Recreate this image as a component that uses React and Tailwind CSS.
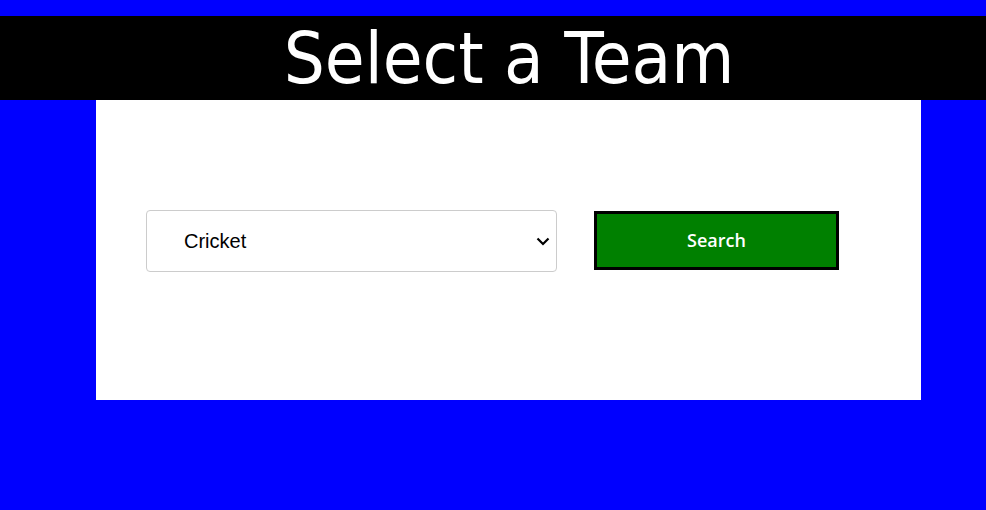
export default function App() {
  return (
    <div className="min-h-[510px] bg-[#0000ff] pt-4 font-['DejaVu_Sans_Condensed','DejaVu_Sans',sans-serif]">
      {/* Header */}
      <div className="flex h-[84px] items-center justify-center bg-black pl-[32px]">
        <h1 className="text-[72px] leading-none text-white">Select a Team</h1>
      </div>

      {/* Card */}
      <div className="ml-[96px] h-[300px] w-[825px] bg-white pl-[50px] pt-[110px]">
        <div className="flex items-center gap-[37px]">
          <div className="relative h-[62px] w-[411px]">
            <select
              defaultValue="cricket"
              className="h-full w-full appearance-none rounded-[4px] border border-[#cccccc] bg-white pl-[37px] font-['Liberation_Sans',Arial,sans-serif] text-[20px] text-black outline-none"
            >
              <option value="cricket">Cricket</option>
              <option value="football">Football</option>
              <option value="hockey">Hockey</option>
            </select>
            <svg
              className="pointer-events-none absolute right-[6px] top-1/2 -translate-y-1/2"
              width="16"
              height="16"
              viewBox="0 0 16 16"
              fill="none"
              stroke="black"
              strokeWidth="2.2"
            >
              <path d="M2.5 5.5 L8 11 L13.5 5.5" />
            </svg>
          </div>
          <button className="-mt-[2px] h-[59px] w-[245px] border-[3px] border-black bg-[#008000] font-['Open_Sans',sans-serif] text-[18px] font-semibold text-white">
            Search
          </button>
        </div>
      </div>
    </div>
  );
}
